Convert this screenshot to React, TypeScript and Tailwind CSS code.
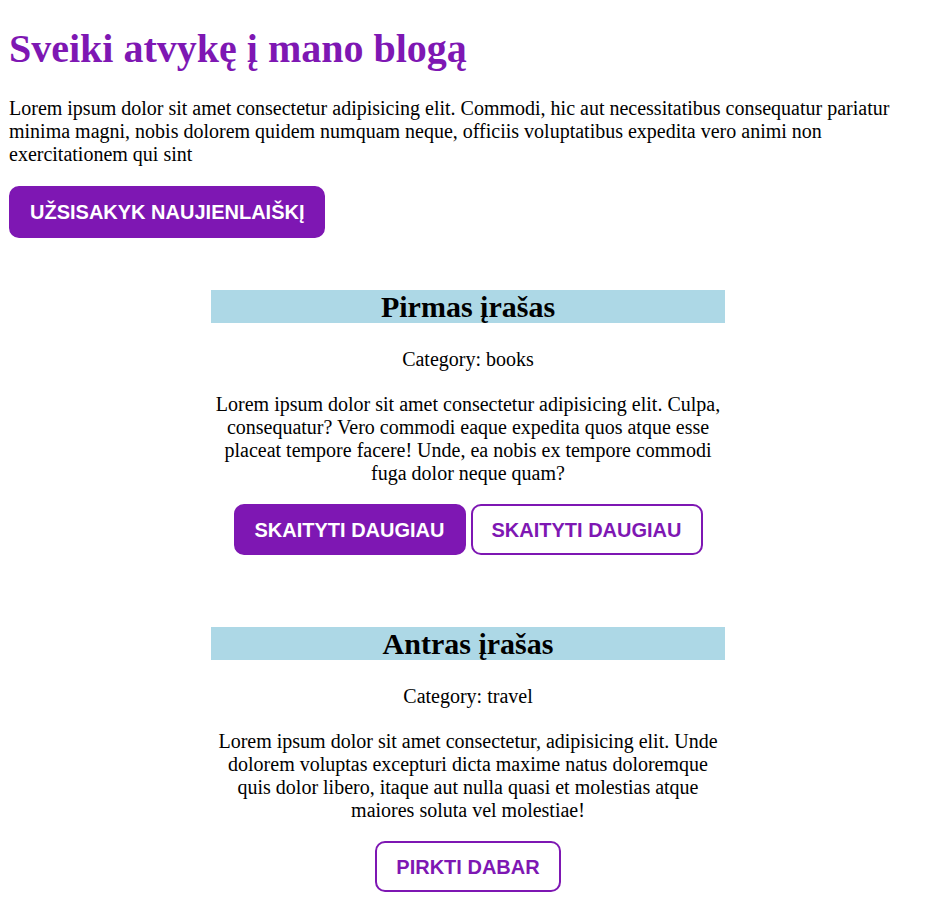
import React from 'react';

const serif = { fontFamily: '"Liberation Serif", "Times New Roman", serif' };

function Post({
  title,
  category,
  text,
  children,
}: {
  title: string;
  category: string;
  text: string;
  children: React.ReactNode;
}) {
  return (
    <article className="w-[514px] mx-auto mt-[52px] pb-[20px] text-center">
      <h2 className="bg-[#add8e6] text-[30px] font-bold leading-[33px] text-black">{title}</h2>
      <p className="mt-[25px] text-[20px] leading-[23px]">Category: {category}</p>
      <p className="mt-[22px] text-[20px] leading-[23px]">{text}</p>
      <div className="mt-[19px] flex justify-center gap-[5px]">{children}</div>
    </article>
  );
}

const btn =
  'h-[51px] px-[19px] rounded-[10px] text-[20px] font-bold uppercase border-2 border-[#7e17b3] font-["Liberation_Sans",Arial,sans-serif]';

export default function App() {
  return (
    <div className="pt-2 pl-[9px] pr-[7px] pb-6 text-black bg-white" style={serif}>
      <h1 className="mt-[18px] text-[40px] font-bold leading-[46px] text-[#7e17b3]">Sveiki atvykę į mano blogą</h1>
      <p className="mt-[25px] text-[20px] leading-[23px]">
        Lorem ipsum dolor sit amet consectetur adipisicing elit. Commodi, hic aut necessitatibus consequatur pariatur
        minima magni, nobis dolorem quidem numquam neque, officiis voluptatibus expedita vero animi non
        exercitationem qui sint
      </p>
      <button className={`${btn} mt-[20px] h-[52px] bg-[#7e17b3] text-white`}>Užsisakyk naujienlaiškį</button>

      <Post
        title="Pirmas įrašas"
        category="books"
        text="Lorem ipsum dolor sit amet consectetur adipisicing elit. Culpa, consequatur? Vero commodi eaque expedita quos atque esse placeat tempore facere! Unde, ea nobis ex tempore commodi fuga dolor neque quam?"
      >
        <button className={`${btn} bg-[#7e17b3] text-white`}>Skaityti daugiau</button>
        <button className={`${btn} bg-white text-[#7e17b3]`}>Skaityti daugiau</button>
      </Post>

      <Post
        title="Antras įrašas"
        category="travel"
        text="Lorem ipsum dolor sit amet consectetur, adipisicing elit. Unde dolorem voluptas excepturi dicta maxime natus doloremque quis dolor libero, itaque aut nulla quasi et molestias atque maiores soluta vel molestiae!"
      >
        <button className={`${btn} bg-white text-[#7e17b3]`}>Pirkti dabar</button>
      </Post>
    </div>
  );
}
